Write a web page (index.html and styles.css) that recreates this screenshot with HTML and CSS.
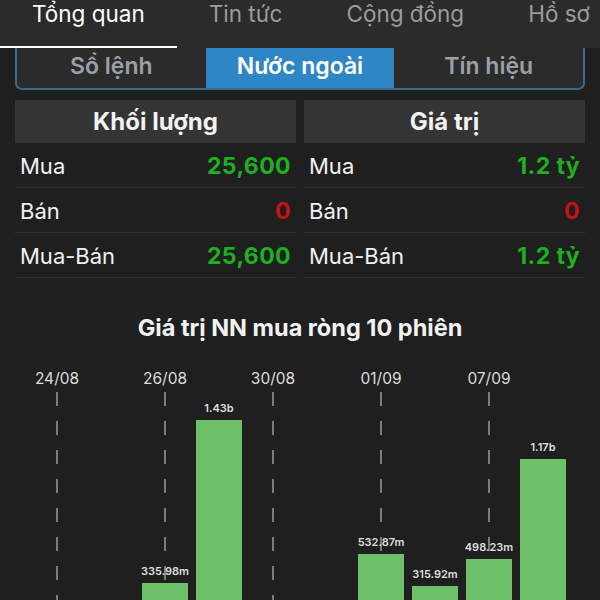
FILE: index.html
```
<!DOCTYPE html>
<html lang="vi">

<head>
    <meta charset="UTF-8">
    <meta name="viewport" content="width=device-width, initial-scale=1.0">
    <title>Nước ngoài</title>

    <link rel="stylesheet" href="styles.css">
</head>

<body>
    <header class="top-tabs">
        <a class="top-tab active" href="#">Tổng quan</a>
        <a class="top-tab" href="#">Tin tức</a>
        <a class="top-tab" href="#">Cộng đồng</a>
        <a class="top-tab" href="#">Hồ sơ</a>
    </header>

    <nav class="segment-wrap" aria-label="sub navigation">
        <div class="segmented">
            <button class="segment" type="button">Sổ lệnh</button>
            <button class="segment active" type="button">Nước ngoài</button>
            <button class="segment" type="button">Tín hiệu</button>
        </div>
    </nav>

    <main>
        <section class="stats">
            <div class="stat-col">
                <h3 class="stat-head">Khối lượng</h3>
                <div class="stat-row"><span>Mua</span><span class="up">25,600</span></div>
                <div class="stat-row"><span>Bán</span><span class="down">0</span></div>
                <div class="stat-row"><span>Mua-Bán</span><span class="up">25,600</span></div>
            </div>
            <div class="stat-col">
                <h3 class="stat-head">Giá trị</h3>
                <div class="stat-row"><span>Mua</span><span class="up">1.2 tỷ</span></div>
                <div class="stat-row"><span>Bán</span><span class="down">0</span></div>
                <div class="stat-row"><span>Mua-Bán</span><span class="up">1.2 tỷ</span></div>
            </div>
        </section>

        <section class="chart">
            <h2 class="chart-title">Giá trị NN mua ròng 10 phiên</h2>
            <div class="plot">
                <div class="slot marked">
                    <span class="date">24/08</span>
                    <div class="slot-body"></div>
                </div>
                <div class="slot">
                    <span class="date"></span>
                    <div class="slot-body"></div>
                </div>
                <div class="slot marked">
                    <span class="date">26/08</span>
                    <div class="slot-body">
                        <span class="bar-value">335.98m</span>
                        <div class="bar" style="height: 50px"></div>
                    </div>
                </div>
                <div class="slot">
                    <span class="date"></span>
                    <div class="slot-body">
                        <span class="bar-value">1.43b</span>
                        <div class="bar" style="height: 213px"></div>
                    </div>
                </div>
                <div class="slot marked">
                    <span class="date">30/08</span>
                    <div class="slot-body"></div>
                </div>
                <div class="slot">
                    <span class="date"></span>
                    <div class="slot-body"></div>
                </div>
                <div class="slot marked">
                    <span class="date">01/09</span>
                    <div class="slot-body">
                        <span class="bar-value">532.87m</span>
                        <div class="bar" style="height: 79px"></div>
                    </div>
                </div>
                <div class="slot">
                    <span class="date"></span>
                    <div class="slot-body">
                        <span class="bar-value">315.92m</span>
                        <div class="bar" style="height: 47px"></div>
                    </div>
                </div>
                <div class="slot marked">
                    <span class="date">07/09</span>
                    <div class="slot-body">
                        <span class="bar-value">498.23m</span>
                        <div class="bar" style="height: 74px"></div>
                    </div>
                </div>
                <div class="slot">
                    <span class="date"></span>
                    <div class="slot-body">
                        <span class="bar-value">1.17b</span>
                        <div class="bar" style="height: 174px"></div>
                    </div>
                </div>
            </div>
        </section>
    </main>
</body>

</html>
```

FILE: styles.css
```
body {
    --page-bg: #1f1f1f;
    --bar-bg: #2b2b2b;
    --head-bg: #343434;
    --line: #303030;
    --green: #1eb01e;
    --red: #c81212;
    --accent: #2e86c4;
}

body,
body * {
    padding: 0;
    margin: 0;
    box-sizing: border-box;
    font-family: 'Inter', 'Liberation Sans', sans-serif;
}

body {
    background-color: var(--page-bg);
    color: #f2f2f2;
    height: 600px;
    overflow: hidden;
}

/* top tabs */
.top-tabs {
    display: flex;
    background-color: var(--bar-bg);
    white-space: nowrap;
}

.top-tab {
    padding: 0 32px 18px;
    font-size: 22.5px;
    line-height: 28px;
    color: #9c9c9c;
    text-decoration: none;
    border-bottom: 2px solid transparent;
}

.top-tab.active {
    color: #ffffff;
    border-bottom-color: #ffffff;
}

/* segmented control */
.segment-wrap {
    padding: 0 15px;
}

.segmented {
    display: grid;
    grid-template-columns: 1fr 1fr 1fr;
    background-color: var(--bar-bg);
    border: 2px solid #3a6a8c;
    border-top: none;
    border-radius: 0 0 7px 7px;
    overflow: hidden;
}

.segment {
    border: none;
    background: none;
    height: 40px;
    padding-bottom: 4px;
    font-size: 23px;
    font-weight: 600;
    color: #9aa0a6;
}

.segment.active {
    background-color: var(--accent);
    color: #ffffff;
}

/* stats table */
.stats {
    display: grid;
    grid-template-columns: 1fr 1fr;
    column-gap: 8px;
    padding: 10px 15px 0;
}

.stat-head {
    background-color: var(--head-bg);
    height: 43px;
    line-height: 43px;
    text-align: center;
    font-size: 24px;
    font-weight: 700;
}

.stat-row {
    display: flex;
    justify-content: space-between;
    align-items: center;
    height: 45px;
    padding: 2px 5px 0 5px;
    border-bottom: 1px solid var(--line);
    font-size: 22px;
}

.stat-row .up,
.stat-row .down {
    font-size: 23px;
    font-weight: 700;
    letter-spacing: 0.4px;
}

.up {
    color: var(--green);
}

.down {
    color: var(--red);
}

/* chart */
.chart-title {
    margin-top: 36px;
    text-align: center;
    font-size: 23.5px;
    line-height: 28px;
    font-weight: 700;
}

.plot {
    display: grid;
    grid-template-columns: repeat(10, 54px);
    padding: 24px 30px 0;
}

.slot {
    display: grid;
    grid-template-rows: 26px 241px;
}

.date {
    text-align: center;
    font-size: 15.5px;
    line-height: 26px;
    color: #dcdcdc;
    white-space: nowrap;
}

.slot-body {
    display: flex;
    flex-direction: column;
    justify-content: flex-end;
    align-items: center;
}

.slot.marked .slot-body {
    background-image: repeating-linear-gradient(to bottom, #7c7c7c 0 14px, transparent 14px 29px);
    background-size: 2px 100%;
    background-repeat: no-repeat;
    background-position: center top;
}

.bar-value {
    font-size: 11px;
    line-height: 14px;
    font-weight: 600;
    color: #dedede;
    margin-bottom: 5px;
    white-space: nowrap;
}

.bar {
    width: 46px;
    background-color: #6dbf68;
}
```
